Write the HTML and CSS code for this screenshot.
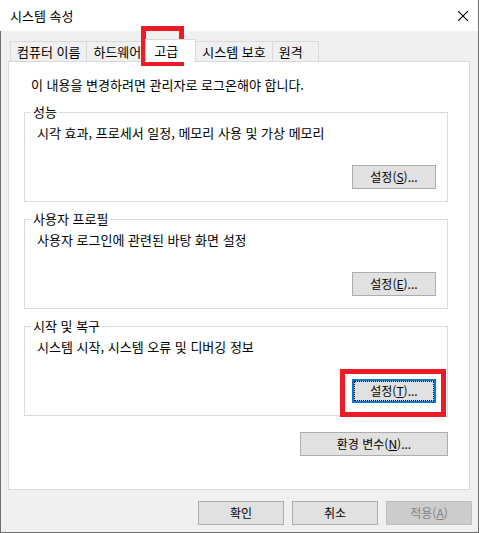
FILE: index.html
```html
<!DOCTYPE html>
<html lang="ko">
<head>
<meta charset="utf-8">
<title>시스템 속성</title>
<link rel="stylesheet" href="styles.css">
</head>
<body>
<div class="window">
  <div class="titlebar">
    <span class="title">시스템 속성</span>
    <svg class="close" width="10" height="10" viewBox="0 0 10 10"><path d="M0 0L10 10M10 0L0 10" stroke="#000" stroke-width="1.1" fill="none"/></svg>
  </div>
  <div class="body">
    <div class="tabs">
      <div class="tab">컴퓨터 이름</div>
      <div class="tab">하드웨어</div>
      <div class="tab active">고급</div>
      <div class="tab">시스템 보호</div>
      <div class="tab">원격</div>
    </div>
    <div class="panel">
      <p class="notice">이 내용을 변경하려면 관리자로 로그온해야 합니다.</p>
      <div class="group">
        <div class="legend">성능</div>
        <p class="desc">시각 효과, 프로세서 일정, 메모리 사용 및 가상 메모리</p>
        <div class="actions"><button class="btn">설정(<u>S</u>)...</button></div>
      </div>
      <div class="group">
        <div class="legend">사용자 프로필</div>
        <p class="desc">사용자 로그인에 관련된 바탕 화면 설정</p>
        <div class="actions"><button class="btn">설정(<u>E</u>)...</button></div>
      </div>
      <div class="group">
        <div class="legend">시작 및 복구</div>
        <p class="desc">시스템 시작, 시스템 오류 및 디버깅 정보</p>
        <div class="actions"><button class="btn focus">설정(<u>T</u>)...</button></div>
      </div>
      <div class="env-row"><button class="btn wide">환경 변수(<u>N</u>)...</button></div>
    </div>
    <div class="footer">
      <button class="btn footer-btn">확인</button>
      <button class="btn footer-btn">취소</button>
      <button class="btn footer-btn disabled">적용(<u>A</u>)</button>
    </div>
  </div>
  <div class="highlight hl-tab"></div>
  <div class="highlight hl-btn"></div>
</div>
</body>
</html>
```

FILE: styles.css
```css
html, body {
  margin: 0;
  padding: 0;
  background: #ffffff;
}

body {
  font-family: "Noto Sans CJK KR", "Noto Sans", sans-serif;
  font-size: 13px;
  color: #000;
}

.window {
  position: relative;
  width: 479px;
  height: 533px;
  box-sizing: border-box;
  border-right: 1px solid #6e6e6e;
  border-bottom: 1px solid #6e6e6e;
  background: #f0f0f0;
  display: flex;
  flex-direction: column;
}

.titlebar {
  height: 31px;
  flex: none;
  background: #fff;
  display: flex;
  align-items: center;
  justify-content: space-between;
  padding: 0 10px 0 10px;
}

.title {
  line-height: 16px;
}

.close {
  display: block;
}

.body {
  flex: 1;
  border-left: 1px solid #6e6e6e;
  padding: 8px 8px 0 7px;
  display: flex;
  flex-direction: column;
}

.tabs {
  display: flex;
  align-items: flex-end;
  padding-left: 2px;
  height: 22px;
}

.tab {
  box-sizing: border-box;
  height: 20px;
  min-width: 47px;
  padding: 0 6px;
  border: 1px solid #d9d9d9;
  border-bottom: 0;
  margin-right: -1px;
  line-height: 19px;
  text-align: left;
  background: #f0f0f0;
  white-space: nowrap;
}

.tab.active {
  height: 23px;
  margin: 0 -1px -1px -2px;
  min-width: 51px;
  padding-left: 8px;
  background: #fff;
  line-height: 21px;
  position: relative;
  z-index: 1;
}

.panel {
  box-sizing: border-box;
  height: 429px;
  background: #fff;
  border: 1px solid #d9d9d9;
  padding: 15px 21px 0 15px;
}

.notice {
  margin: 0 0 19px 7px;
  line-height: 16px;
}

.group {
  border: 1px solid #dcdcdc;
  padding: 0 11px 12px 12px;
}

.group + .group {
  margin-top: 17px;
}

.legend {
  width: fit-content;
  margin: -9px 0 0 -6px;
  padding: 0 2px;
  background: #fff;
  line-height: 16px;
}

.desc {
  margin: 5px 0 0 0;
  line-height: 16px;
}

.actions {
  display: flex;
  justify-content: flex-end;
  margin-top: 24px;
}

.btn {
  box-sizing: border-box;
  width: 84px;
  height: 24px;
  padding: 0;
  background: #e1e1e1;
  border: 1px solid #adadad;
  font-family: inherit;
  font-size: 12px;
  color: #000;
  line-height: 20px;
  text-align: center;
}

.btn u {
  text-underline-offset: 1px;
}

.btn.focus {
  border-color: #0078d7;
  box-shadow: inset 0 0 0 1px #0078d7;
  outline: 1px dotted #000;
  outline-offset: -3px;
}

.env-row {
  display: flex;
  justify-content: flex-end;
  margin-top: 16px;
}

.btn.wide {
  width: 148px;
}

.footer {
  display: flex;
  justify-content: flex-end;
  gap: 8px;
  padding-top: 11px;
  margin-right: -2px;
}

.btn.footer-btn {
  width: 86px;
}

.btn.disabled {
  background: #cccccc;
  border-color: #bfbfbf;
  color: #838383;
}

.highlight {
  position: absolute;
  box-sizing: border-box;
  border: 5px solid #ed1c24;
}

.hl-tab {
  left: 141px;
  top: 26px;
  width: 43px;
  height: 40px;
}

.hl-btn {
  left: 340px;
  top: 369px;
  width: 106px;
  height: 48px;
}
```
